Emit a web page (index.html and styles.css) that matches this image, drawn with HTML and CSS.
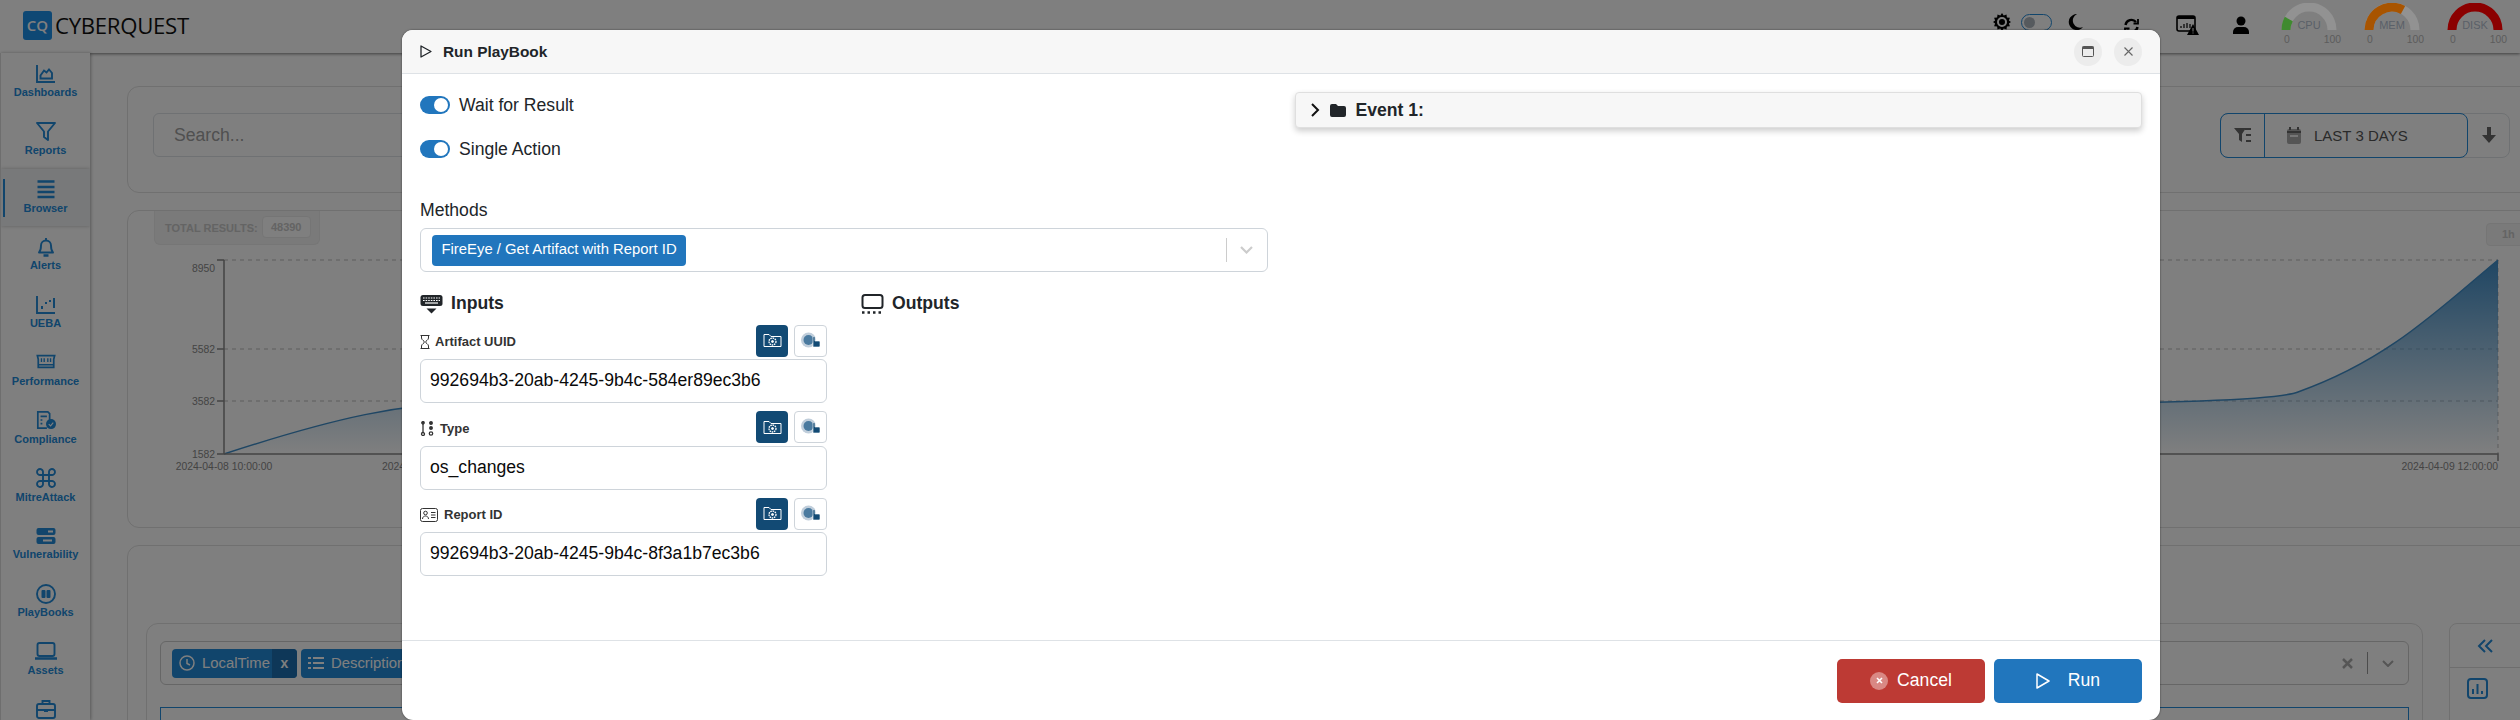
FILE: index.html
```html
<!DOCTYPE html>
<html lang="en">
<head>
<meta charset="utf-8">
<title>Cyberquest</title>
<link rel="stylesheet" href="styles.css">
</head>
<body>
<div class="app">
  <header class="topbar">
    <div class="brand"><span class="logo-mark">CQ</span><span class="logo-text">CYBERQUEST</span></div>
    <div class="top-tools">
      <svg class="t-gear" width="20" height="20" viewBox="0 0 20 20"><path d="M10 1l1.700 2.400 2.800-1 .4 3 3 .4-1 2.800L19 10l-2.100 1.400 1 2.800-3 .4-.4 3-2.800-1L10 19l-1.700-2.400-2.800 1-.4-3-3-.4 1-2.800L1 10l2.100-1.400-1-2.800 3-.4.4-3 2.800 1z" fill="#000"/><circle cx="10" cy="10" r="4" fill="none" stroke="#fff" stroke-width="2"/></svg>
      <span class="t-switch"><i></i></span>
      <svg class="t-moon" width="15" height="16" viewBox="0 0 15 16"><path d="M9 0a8 8 0 1 0 6 13A7 7 0 0 1 9 0z" fill="#000"/></svg>
      <svg class="t-sync" width="15" height="16" viewBox="0 0 15 16" fill="none" stroke="#000" stroke-width="2.400"><path d="M1.500 7a6 6 0 0 1 10.500-3M13.500 9a6 6 0 0 1-10.500 3"/><path d="M14 1v4.500H9.500M1 15v-4.500h4.500" stroke-width="1.800"/></svg>
      <svg class="t-cal" width="23" height="21" viewBox="0 0 23 21"><rect x="1" y="2" width="18" height="15" rx="2" fill="none" stroke="#000" stroke-width="1.600"/><rect x="1" y="2" width="18" height="3" fill="#000"/><path d="M5 12v2M8 10v4M11 9v5M14 10v4" stroke="#333" stroke-width="1.500"/><path d="M17 10l6 11H11z" fill="#000"/><path d="M17 14v3.500M17 18.500v1" stroke="#fff"/></svg>
      <svg class="t-user" width="16" height="18" viewBox="0 0 16 18"><circle cx="8" cy="5" r="4.500" fill="#000"/><path d="M0 18v-2a5 5 0 0 1 5-5h6a5 5 0 0 1 5 5v2z" fill="#000"/></svg>
      <div class="gauge">
        <svg width="56" height="27" viewBox="0 0 56 27" fill="none" stroke-width="9"><path d="M5 27a23 23 0 0 1 46 0" stroke="#929292"/><path d="M5 27a23 23 0 0 1 2.800-11" stroke="#3f8a2f"/></svg>
        <span class="g-name">CPU</span>
        <div class="g-scale"><span>0</span><span>100</span></div>
      </div>
      <div class="gauge">
        <svg width="56" height="27" viewBox="0 0 56 27" fill="none" stroke-width="9"><path d="M5 27a23 23 0 0 1 46 0" stroke="#929292"/><path d="M5 27a23 23 0 0 1 34-20" stroke="#a85400"/></svg>
        <span class="g-name">MEM</span>
        <div class="g-scale"><span>0</span><span>100</span></div>
      </div>
      <div class="gauge">
        <svg width="56" height="27" viewBox="0 0 56 27" fill="none" stroke-width="9"><path d="M5 27a23 23 0 0 1 46 0" stroke="#8b0000"/></svg>
        <span class="g-name">DISK</span>
        <div class="g-scale"><span>0</span><span>100</span></div>
      </div>
    </div>
  </header>

  <div class="workspace">
    <nav class="sidebar">
      <a class="nav-item"><svg class="nav-ico" viewBox="0 0 20 20"><path d="M1 1v17h18"/><path d="M4.500 14.500v-3l3.500-5 2.500 2 2.500-3 3 3.500v5.500z"/></svg><span>Dashboards</span></a>
      <a class="nav-item"><svg class="nav-ico" viewBox="0 0 20 20"><path d="M1 2h18l-7 8.500V19l-4-3v-5.500z" stroke-linejoin="round"/></svg><span>Reports</span></a>
      <a class="nav-item active"><svg class="nav-ico" viewBox="0 0 20 20"><path d="M1.500 2.500h17M1.500 8h17M1.500 13h17M1.500 18h17" stroke-width="2.500"/></svg><span>Browser</span></a>
      <a class="nav-item"><svg class="nav-ico" viewBox="0 0 20 20"><path d="M10 1v2M3 15.500c2-2 2-4 2-7a5 5 0 0 1 10 0c0 3 0 5 2 7z" stroke-linejoin="round"/><path d="M7.500 18.500h5" stroke-width="2.500"/></svg><span>Alerts</span></a>
      <a class="nav-item"><svg class="nav-ico" viewBox="0 0 20 20"><path d="M1 1v17h18"/><path d="M6 11v3M10 7v2M14 5v2M18 3v10" stroke-width="2"/></svg><span>UEBA</span></a>
      <a class="nav-item"><svg class="nav-ico" viewBox="0 0 22 20"><path d="M1.500 3h19l-1 4v9h-17V7z"/><path d="M6 6v4M9 6v4M13 6v4M16 6v4M3 13h16" stroke-width="1.500"/></svg><span>Performance</span></a>
      <a class="nav-item"><svg class="nav-ico" viewBox="0 0 22 20"><path d="M12 19H2V1h11l2 2v7"/><path d="M5 6h7M5 10h2M5 14h2" stroke-width="1.800"/><circle cx="16.500" cy="14.500" r="5.500" class="fill"/><path d="M14 14.500l2 2 3-3.500" stroke="#fff" stroke-width="1.200"/></svg><span>Compliance</span></a>
      <a class="nav-item"><svg class="nav-ico" viewBox="0 0 20 20"><path d="M7 7h6v6H7zM7 7H4.500A3 3 0 1 1 7 4.500zM13 7V4.500A3 3 0 1 1 15.500 7zM13 13h2.500A3 3 0 1 1 13 15.500zM7 13v2.500A3 3 0 1 1 4.500 13z"/></svg><span>MitreAttack</span></a>
      <a class="nav-item"><svg class="nav-ico" viewBox="0 0 20 20"><rect x="0.500" y="2" width="19" height="7" rx="2" class="fill"/><rect x="0.500" y="11" width="19" height="7" rx="2" class="fill"/><path d="M12 5.500h5M7 14.500h9" stroke="#fff" stroke-width="2"/></svg><span>Vulnerability</span></a>
      <a class="nav-item"><svg class="nav-ico" viewBox="0 0 20 20"><circle cx="10" cy="10" r="9"/><rect x="5.500" y="6" width="4" height="8" rx="1" class="fill"/><rect x="10.500" y="6" width="4" height="8" rx="1" class="fill"/></svg><span>PlayBooks</span></a>
      <a class="nav-item"><svg class="nav-ico nav-wide" viewBox="0 0 24 20"><rect x="3.500" y="2" width="17" height="13" rx="2"/><path d="M1 17.500h22" stroke-width="2.500"/></svg><span>Assets</span></a>
      <a class="nav-item"><svg class="nav-ico" viewBox="0 0 20 20"><rect x="1" y="5" width="18" height="14" rx="2"/><path d="M6.500 5V2h7v3M1 11h18"/><rect x="8" y="10" width="4" height="3" class="fill"/></svg></a>
    </nav>

    <main class="content">
      <section class="card search-card">
        <div class="search-box">Search...</div>
        <div class="filter-group">
          <div class="filter-active">
            <span class="f-icon"><svg width="18" height="16" viewBox="0 0 18 16"><path d="M0 1h12L8 7v8l-3-2V7z" fill="#666"/><path d="M11 2h6M12 8h5M12 14h5" stroke="#666" stroke-width="2"/></svg></span>
            <span class="f-date"><svg width="14" height="17" viewBox="0 0 14 17"><path d="M0 4a2 2 0 0 1 2-2h10a2 2 0 0 1 2 2v11a2 2 0 0 1-2 2H2a2 2 0 0 1-2-2z" fill="#aaa"/><path d="M3 0v3M11 0v3" stroke="#666" stroke-width="2"/><path d="M0 5h14" stroke="#666" stroke-width="2"/><path d="M3 9h8" stroke="#eee" stroke-width="2"/></svg>LAST 3 DAYS</span>
          </div>
          <span class="f-down"><svg width="14" height="16" viewBox="0 0 14 16"><path d="M5 0h4v8h5l-7 8-7-8h5z" fill="#666"/></svg></span>
        </div>
      </section>

      <section class="card chart-card">
        <div class="results-tab">TOTAL RESULTS:<span class="results-count">48390</span></div>
        <span class="range-tag">1h</span>
        <svg class="chart" width="2393" height="230" viewBox="0 0 2393 230">
          <defs>
            <linearGradient id="area" x1="0" y1="0" x2="0" y2="1">
              <stop offset="0" stop-color="#3f8dc8"/>
              <stop offset="1" stop-color="#3f8dc8" stop-opacity="0"/>
            </linearGradient>
          </defs>
          <g stroke="#bbb" stroke-dasharray="4 4" fill="none">
            <path d="M96 10H2370M96 99H2370M96 151H2370M2370 10V204"/>
          </g>
          <path d="M96 204C200 170 280 150 360 153C1000 140 2100 170 2170 142C2260 110 2310 60 2370 10V204H96z" fill="url(#area)"/>
          <path d="M96 204C200 170 280 150 360 153C1000 140 2100 170 2170 142C2260 110 2310 60 2370 10" fill="none" stroke="#3f8dc8" stroke-width="1.500"/>
          <path d="M96 10V204H2370V211M89 10H96M89 99H96M89 151H96M89 204H96" fill="none" stroke="#888" stroke-width="1.500"/>
          <g class="axis-text">
            <text x="87" y="22" text-anchor="end">8950</text>
            <text x="87" y="103" text-anchor="end">5582</text>
            <text x="87" y="155" text-anchor="end">3582</text>
            <text x="87" y="208" text-anchor="end">1582</text>
            <text x="96" y="220" text-anchor="middle">2024-04-08 10:00:00</text>
            <text x="254" y="220">2024-04-08 16:00:00</text>
            <text x="2370" y="220" text-anchor="end">2024-04-09 12:00:00</text>
          </g>
        </svg>
      </section>

      <section class="card table-card">
        <div class="table-main">
          <div class="col-select">
            <span class="col-chip"><span class="col-label"><svg width="16" height="16" viewBox="0 0 16 16" fill="none" stroke="#fff" stroke-width="1.500"><circle cx="8" cy="8" r="7"/><path d="M8 4v4.500l3 1.500"/></svg>LocalTime</span><b>x</b></span>
            <span class="col-chip"><span class="col-label"><svg width="16" height="14" viewBox="0 0 16 14" fill="none" stroke="#fff" stroke-width="2"><path d="M5 2h11M5 7h11M5 12h11M0 2h3M0 7h3M0 12h3"/></svg>Description</span><b>x</b></span>
            <span class="col-tools"><svg width="11" height="11" viewBox="0 0 11 11" stroke="#aaa" stroke-width="2.500"><path d="M1 1l9 9M10 1l-9 9"/></svg><i></i><svg width="12" height="7" viewBox="0 0 12 7" fill="none" stroke="#aaa" stroke-width="2"><path d="M1 1l5 5 5-5"/></svg></span>
          </div>
          <div class="table-box"></div>
        </div>
        <aside class="table-side">
          <div class="side-top"><svg width="17" height="14" viewBox="0 0 17 14" fill="none" stroke="#228ad8" stroke-width="2"><path d="M8 1L2 7l6 6M15 1L9 7l6 6"/></svg></div>
          <svg class="side-ico" width="21" height="21" viewBox="0 0 21 21" fill="none" stroke="#228ad8" stroke-width="2"><rect x="1" y="1" width="19" height="19" rx="3"/><path d="M6 11v5M10.500 6v10M15 13v3"/></svg>
        </aside>
      </section>
    </main>
  </div>
</div>

<div class="overlay"></div>

<div class="modal">
  <div class="modal-head">
    <svg class="m-play" width="12" height="13" viewBox="0 0 12 13" fill="none" stroke="#212529" stroke-width="1.300" stroke-linejoin="round"><path d="M1 1l10 5.500L1 12z"/></svg>
    <h2>Run PlayBook</h2>
    <span class="head-btn first"><svg width="12" height="11" viewBox="0 0 12 11"><rect x="0.500" y="0.500" width="11" height="10" rx="1" fill="none" stroke="#555"/><rect x="0.500" y="0.500" width="11" height="2.500" fill="#555"/></svg></span>
    <span class="head-btn"><svg width="9" height="9" viewBox="0 0 9 9" stroke="#666" stroke-width="1.100"><path d="M.5.500l8 8M8.500.500l-8 8"/></svg></span>
  </div>
  <div class="modal-body">
    <div class="left-col">
      <label class="toggle-row"><span class="toggle"></span>Wait for Result</label>
      <label class="toggle-row"><span class="toggle"></span>Single Action</label>
      <div class="methods-label">Methods</div>
      <div class="methods-select">
        <span class="method-chip">FireEye / Get Artifact with Report ID</span>
        <i class="sel-sep"></i>
        <svg class="sel-chev" width="13" height="8" viewBox="0 0 13 8" fill="none" stroke="#ccc" stroke-width="2.200"><path d="M1 1l5.500 5.500L12 1"/></svg>
      </div>
      <div class="io-grid">
        <div class="io-col">
          <h3 class="io-title">
            <svg width="23" height="20" viewBox="0 0 23 20"><rect x="0.500" y="1" width="22" height="11" rx="2.500" fill="#212529"/><path d="M3 4h17M3 6.500h17" stroke="#fff" stroke-width="1.200" stroke-dasharray="1.600 1"/><path d="M5 9h13" stroke="#fff" stroke-width="1.200"/><path d="M6.500 14.500h10l-5 5z" fill="#212529"/></svg>
            Inputs
          </h3>
          <div class="field">
            <div class="field-head">
              <span class="field-label"><svg width="10" height="14" viewBox="0 0 10 14" fill="none" stroke="#333" stroke-width="1"><path d="M.5.500h9M.5 13.500h9M1.500.500v2.500c0 2 3 3 3 4s-3 2-3 4v2.500M8.500.500v2.500c0 2-3 3-3 4s3 2 3 4v2.500"/></svg>Artifact UUID</span>
              <span class="field-btn dark"><svg width="19" height="15" viewBox="0 0 19 15" fill="none" stroke="#fff" stroke-width="1"><path d="M1 13.500V1.500h5l2 2h10v10z"/><circle cx="9.500" cy="8.500" r="3.500" stroke-dasharray="1.600 .7" stroke-width="1.300"/><circle cx="9.500" cy="8.500" r="1" fill="#fff"/></svg></span>
              <span class="field-btn light"><svg width="20" height="18" viewBox="0 0 20 18"><circle cx="7.500" cy="8" r="7.500" fill="#c0cedb"/><circle cx="7.500" cy="8" r="5" fill="#4a7a9f"/><path d="M12 11V5.500a1 1 0 0 1 2 0V9h4a1 1 0 0 1 1 1v4a1 1 0 0 1-1 1h-6z" fill="#124a74" stroke="#fff" stroke-width=".6"/></svg></span>
            </div>
            <div class="field-input">992694b3-20ab-4245-9b4c-584er89ec3b6</div>
          </div>
          <div class="field">
            <div class="field-head">
              <span class="field-label type"><svg width="14" height="15" viewBox="0 0 14 15" fill="none" stroke="#333" stroke-width="1.300"><path d="M3 2.500v9"/><circle cx="3" cy="1.800" r="1.200" fill="#333"/><circle cx="3" cy="13" r="1.500"/><circle cx="11" cy="2" r="1.300" fill="#333"/><circle cx="11" cy="7" r="1.300" fill="#333"/><circle cx="11" cy="12.500" r="1.700"/></svg>Type</span>
              <span class="field-btn dark"><svg width="19" height="15" viewBox="0 0 19 15" fill="none" stroke="#fff" stroke-width="1"><path d="M1 13.500V1.500h5l2 2h10v10z"/><circle cx="9.500" cy="8.500" r="3.500" stroke-dasharray="1.600 .7" stroke-width="1.300"/><circle cx="9.500" cy="8.500" r="1" fill="#fff"/></svg></span>
              <span class="field-btn light"><svg width="20" height="18" viewBox="0 0 20 18"><circle cx="7.500" cy="8" r="7.500" fill="#c0cedb"/><circle cx="7.500" cy="8" r="5" fill="#4a7a9f"/><path d="M12 11V5.500a1 1 0 0 1 2 0V9h4a1 1 0 0 1 1 1v4a1 1 0 0 1-1 1h-6z" fill="#124a74" stroke="#fff" stroke-width=".6"/></svg></span>
            </div>
            <div class="field-input">os_changes</div>
          </div>
          <div class="field">
            <div class="field-head">
              <span class="field-label report"><svg width="18" height="14" viewBox="0 0 18 14" fill="none" stroke="#333" stroke-width="1"><rect x="0.500" y="0.500" width="17" height="13" rx="2"/><circle cx="5.500" cy="5" r="1.800"/><path d="M2.500 11c0-4 6-4 6 0M11 4.500h4.500M11 7h4.500M11 9.500h4.500"/></svg>Report ID</span>
              <span class="field-btn dark"><svg width="19" height="15" viewBox="0 0 19 15" fill="none" stroke="#fff" stroke-width="1"><path d="M1 13.500V1.500h5l2 2h10v10z"/><circle cx="9.500" cy="8.500" r="3.500" stroke-dasharray="1.600 .7" stroke-width="1.300"/><circle cx="9.500" cy="8.500" r="1" fill="#fff"/></svg></span>
              <span class="field-btn light"><svg width="20" height="18" viewBox="0 0 20 18"><circle cx="7.500" cy="8" r="7.500" fill="#c0cedb"/><circle cx="7.500" cy="8" r="5" fill="#4a7a9f"/><path d="M12 11V5.500a1 1 0 0 1 2 0V9h4a1 1 0 0 1 1 1v4a1 1 0 0 1-1 1h-6z" fill="#124a74" stroke="#fff" stroke-width=".6"/></svg></span>
            </div>
            <div class="field-input">992694b3-20ab-4245-9b4c-8f3a1b7ec3b6</div>
          </div>
        </div>
        <div class="io-col">
          <h3 class="io-title">
            <svg width="23" height="20" viewBox="0 0 23 20" fill="none" stroke="#212529"><rect x="1.500" y="1" width="20" height="13" rx="2.500" stroke-width="2"/><path d="M1 18.500h21" stroke-width="2.400" stroke-dasharray="2.500 3"/></svg>
            Outputs
          </h3>
        </div>
      </div>
    </div>
    <div class="right-col">
      <div class="event-card">
        <svg width="9" height="14" viewBox="0 0 9 14" fill="none" stroke="#111" stroke-width="2"><path d="M1 1l6 6-6 6"/></svg>
        <svg class="ev-folder" width="16" height="13" viewBox="0 0 16 13"><path d="M0 2a2 2 0 0 1 2-2h4l2 2h6a2 2 0 0 1 2 2v7a2 2 0 0 1-2 2H2a2 2 0 0 1-2-2z" fill="#212529"/></svg>
        <span>Event 1:</span>
      </div>
    </div>
  </div>
  <div class="modal-foot">
    <button class="foot-btn cancel"><span class="x-dot"><svg width="7" height="7" viewBox="0 0 7 7" stroke="#fff" stroke-width="1.600"><path d="M1 1l5 5M6 1L1 6"/></svg></span>Cancel</button>
    <button class="foot-btn run"><svg width="14" height="16" viewBox="0 0 14 16" fill="none" stroke="#fff" stroke-width="1.500" stroke-linejoin="round"><path d="M1 1l12 7-12 7z"/></svg>Run</button>
  </div>
</div>
</body>
</html>
```
FILE: styles.css
```css
* { box-sizing: border-box; }
html, body { margin: 0; height: 720px; overflow: hidden; }
body { font-family: "Liberation Sans", Arial, sans-serif; background: #fff; color: #212529; }

.app { width: 2520px; height: 720px; display: flex; flex-direction: column; overflow: hidden; }

.topbar { height: 53px; flex: none; display: flex; justify-content: space-between; align-items: flex-start; background: #fff; box-shadow: 0 1px 3px rgba(0,0,0,.5); position: relative; padding: 0 17px 0 23px; }
.brand { display: flex; align-items: center; gap: 3px; padding-top: 11px; }
.logo-mark { width: 29px; height: 29px; border-radius: 3px; background: #1c90e8; color: #fff; font: 600 15px/29px "Open Sans", sans-serif; text-align: center; }
.logo-text { font: 400 22.2px/29px "Open Sans", sans-serif; color: #111; letter-spacing: -.3px; }

.top-tools { display: flex; align-items: flex-start; }
.t-gear { margin-top: 12px; }
.t-switch { width: 31px; height: 17px; border: 1px solid #228ad8; border-radius: 9px; margin: 14px 0 0 9px; padding: 2px; background: #fff; display: block; }
.t-switch i { display: block; width: 11px; height: 11px; border-radius: 50%; background: #adb5bd; }
.t-moon { margin: 14px 0 0 16px; }
.t-sync { margin: 18px 0 0 41px; }
.t-cal { margin: 14px 0 0 37px; }
.t-user { margin: 16px 0 0 34px; }
.gauge { position: relative; z-index: 11; width: 56px; margin-left: 32px; padding-top: 3px; }
.gauge + .gauge { margin-left: 27px; }
.gauge svg { display: block; }
.g-name { position: absolute; left: 0; right: 0; top: 18px; text-align: center; font-size: 11px; line-height: 14px; color: #5a6068; }
.g-scale { display: flex; justify-content: space-between; font-size: 10.4px; line-height: 12px; color: #5c5c5c; padding: 4px 0 0 3px; margin-right: -4px; }

.workspace { flex: 1; display: flex; min-height: 0; }

.sidebar { width: 90px; flex: none; border-left: 1px solid #ddd; box-shadow: 1px 0 3px rgba(0,0,0,.3); background: #fff; overflow: hidden; position: relative; }
.nav-item { height: 57.8px; display: flex; flex-direction: column; align-items: center; padding-top: 10.5px; color: #228ad8; font-size: 11px; font-weight: 700; line-height: 13px; position: relative; }
.nav-item span { margin-top: 2.5px; }
.nav-item.active { background: #f1f3f5; box-shadow: 0 0 4px rgba(0,0,0,.25); }
.nav-item.active::before { content: ""; position: absolute; left: 2px; top: 10px; width: 2px; height: 38px; background: #228ad8; }
.nav-ico { width: 20px; height: 20px; flex: none; fill: none; stroke: #228ad8; stroke-width: 1.900; }
.nav-ico.nav-wide { width: 24px; }
.nav-ico .fill { fill: #228ad8; stroke: none; }

.content { flex: 1; min-width: 0; overflow: hidden; padding: 33px 0 0 37px; display: flex; flex-direction: column; gap: 17px; }
.card { border: 1px solid #e0e0e0; border-radius: 12px; margin-right: -20px; background: #fff; flex: none; }

.search-card { height: 107px; display: flex; align-items: center; justify-content: space-between; padding: 0 29px 9px 25px; }
.search-box { width: 1400px; height: 44px; border: 1px solid #dee2e6; border-radius: 6px; padding-left: 20px; font-size: 17.6px; line-height: 42px; color: #a0a0a0; }
.filter-group { display: flex; width: 290px; height: 45px; border: 1px solid #dee2e6; border-radius: 8px; }
.filter-active { display: flex; width: 248px; margin: -1px 0 -1px -1px; border: 1px solid #228ad8; border-radius: 8px; }
.f-icon { width: 44px; display: flex; align-items: center; justify-content: center; border-right: 1px solid #228ad8; }
.f-date { flex: 1; display: flex; align-items: center; gap: 13px; padding-left: 22px; font-size: 15px; color: #555; }
.f-down { flex: 1; display: flex; align-items: center; justify-content: center; }

.chart-card { height: 318px; position: relative; }
.results-tab { position: absolute; left: 26px; top: 0; width: 166px; height: 34px; background: #f4f4f4; border: 1px solid #ececec; border-top: 0; border-radius: 0 0 6px 6px; display: flex; align-items: center; padding-left: 10px; font-size: 11px; font-weight: 700; color: #c8c8c8; }
.results-count { margin-left: 4px; width: 49px; height: 22px; border: 1px solid #eaeaea; border-radius: 4px; background: #fff; display: flex; align-items: center; justify-content: center; margin-top: -1px; }
.range-tag { position: absolute; left: 2358px; top: 12px; width: 60px; height: 23px; border: 1px solid #eaeaea; border-radius: 4px; background: #f4f4f4; font-size: 11px; font-weight: 700; line-height: 21px; padding-left: 15px; color: #c8c8c8; }
.chart { position: absolute; left: 0; top: 39px; }
.axis-text text { font-size: 10.4px; fill: #888; font-family: "Liberation Sans", Arial, sans-serif; }

.table-card { height: 300px; display: flex; gap: 26px; padding: 77px 0 0 18px; }
.table-main { width: 2277px; height: 300px; flex: none; border: 1px solid #e0e0e0; border-radius: 12px; padding: 17px 13px 0; }
.col-select { height: 44px; border: 1px solid #ccc; border-radius: 6px; display: flex; align-items: center; gap: 4px; padding: 0 11px; }
.col-chip { display: flex; height: 29px; width: 125px; flex: none; border-radius: 4px; background: #228ad8; color: #fff; font-size: 14.85px; overflow: hidden; white-space: nowrap; }
.col-chip .col-label { flex: 1; display: flex; align-items: center; gap: 7px; padding-left: 7px; }
.col-chip b { width: 25px; background: #1c6fb0; display: flex; align-items: center; justify-content: center; font-size: 14px; }
.col-chip + .col-chip { width: 150px; }
.col-tools { margin-left: auto; display: flex; align-items: center; gap: 14px; padding-right: 3px; }
.col-tools i { width: 1px; height: 22px; background: #999; }
.table-box { margin-top: 22px; height: 200px; border: 1px solid #228ad8; }
.table-side { width: 90px; height: 300px; flex: none; border: 1px solid #e0e0e0; border-radius: 8px; }
.side-top { height: 44px; border-bottom: 1px solid #ddd; display: flex; align-items: center; justify-content: center; padding-right: 18px; }
.side-ico { display: block; margin: 10px 0 0 17px; }

.overlay { position: absolute; inset: 0; background: rgba(0,0,0,.5); z-index: 10; }

.modal { position: absolute; left: 402px; top: 30px; width: 1758px; height: 690px; background: #fff; border-radius: 11px; box-shadow: 0 0 2px rgba(0,0,0,.6); z-index: 11; display: flex; flex-direction: column; overflow: hidden; }
.modal-head { height: 44px; flex: none; background: #f7f7f7; border-bottom: 1px solid #dee2e6; display: flex; align-items: center; padding: 0 18px 0 18px; }
.m-play { margin-right: 11px; }
.modal-head h2 { margin: 0; flex: 1; font-size: 15.4px; font-weight: 700; color: #212529; }
.head-btn { width: 28px; height: 28px; border-radius: 50%; background: #ececec; display: flex; align-items: center; justify-content: center; }
.head-btn.first { margin-right: 12px; }

.modal-body { flex: 1; min-height: 0; display: grid; grid-template-columns: 1fr 1fr; gap: 27px; padding: 18px 18px 0; }

.toggle-row { display: flex; align-items: center; gap: 9px; height: 26px; margin-bottom: 18px; font-size: 17.6px; color: #212529; }
.toggle { width: 30px; height: 18px; border-radius: 9px; background: #2176bd; position: relative; flex: none; }
.toggle::after { content: ""; position: absolute; right: 2px; top: 2px; width: 14px; height: 14px; border-radius: 50%; background: #fff; }

.methods-label { margin-top: 37px; font-size: 17.6px; line-height: 22px; margin-bottom: 7px; }
.methods-select { height: 44px; border: 1px solid #ced4da; border-radius: 6px; display: flex; align-items: center; padding: 0 11px; }
.method-chip { height: 31px; background: #2176bd; color: #fff; font-size: 14.85px; line-height: 29px; padding: 0 9.5px; border-radius: 4px; }
.sel-sep { margin-left: auto; width: 1px; height: 24px; background: #ccc; }
.sel-chev { margin: 0 2.5px 0 13.5px; }

.io-grid { display: grid; grid-template-columns: 407px 1fr; gap: 34px; margin-top: 15px; }
.io-title { margin: 0 0 4px; height: 33px; display: flex; align-items: center; gap: 8px; font-size: 17.6px; font-weight: 700; color: #212529; }
.field { height: 79px; margin-bottom: 7.5px; display: flex; flex-direction: column; gap: 2px; }
.field-head { height: 33px; display: flex; align-items: center; gap: 6px; }
.field-label { flex: 1; display: flex; align-items: center; gap: 5px; font-size: 13px; font-weight: 700; color: #333; padding-top: 2px; }
.field-label.type { gap: 6px; }
.field-label.report { gap: 6px; }
.field-btn { width: 32px; height: 32px; border-radius: 4px; display: flex; align-items: center; justify-content: center; }
.field-btn.dark { background: #124a74; }
.field-btn.light { width: 33px; border: 1px solid #ced4da; }
.field-input { height: 44px; border: 1px solid #ced4da; border-radius: 6px; padding-left: 9px; font-size: 17.6px; line-height: 41px; color: #0a0a0a; }

.event-card { height: 36px; background: #f7f7f7; border: 1px solid #dfdfdf; border-radius: 4px; box-shadow: 0 3px 6px rgba(0,0,0,.2); display: flex; align-items: center; padding-left: 15px; font-size: 17.6px; font-weight: 700; color: #212529; }
.ev-folder { margin: 0 10px 0 10px; }

.modal-foot { height: 80px; flex: none; border-top: 1px solid #dee2e6; display: flex; justify-content: flex-end; align-items: center; gap: 9px; padding: 0 18px 0 0; }
.foot-btn { width: 148px; height: 44px; border: 0; border-radius: 5px; color: #fff; font-family: inherit; font-size: 17.6px; display: flex; align-items: center; justify-content: center; }
.foot-btn.cancel { background: #bd3a34; gap: 9px; }
.foot-btn.run { background: #2176bd; gap: 18px; }
.x-dot { width: 18px; height: 18px; border-radius: 50%; background: #d98884; display: flex; align-items: center; justify-content: center; }
```
